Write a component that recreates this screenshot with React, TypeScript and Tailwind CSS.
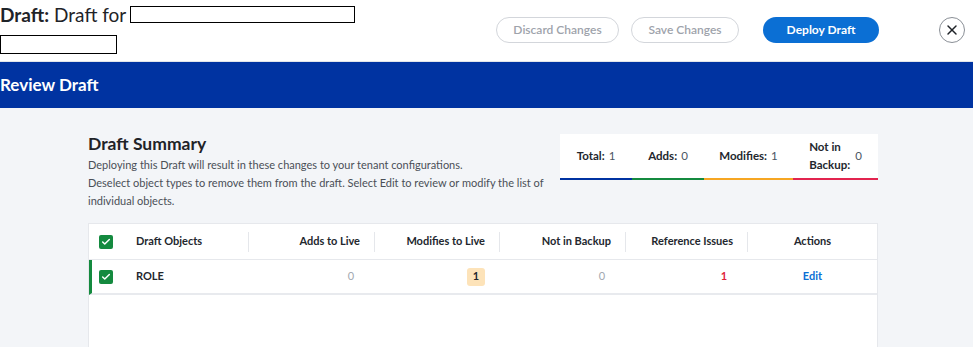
import { Check, X } from 'lucide-react';

const font = { fontFamily: 'Lato, "Noto Sans", sans-serif' };

const CheckBox = () => (
  <span className="flex h-[14px] w-[14px] items-center justify-center rounded-[2px] bg-[#148a3f]">
    <Check className="h-[10px] w-[10px] text-white" strokeWidth={3.5} />
  </span>
);

const Stat = ({ label, value, color, wide }: { label: string; value: string; color: string; wide?: boolean }) => (
  <div className={`flex items-center justify-center gap-1 border-b-2 ${color}`}>
    <span className={`font-bold text-[11.5px] leading-[18px] text-[#23272e] ${wide ? 'w-[42px]' : ''}`}>{label}</span>
    <span className="text-[11.5px] text-[#4b5563]">{value}</span>
  </div>
);

const HeadCell = ({ children, sep = true }: { children: React.ReactNode; sep?: boolean }) => (
  <div className="relative flex items-center justify-end pr-[14px] text-[11px] font-bold text-[#23272e]">
    {sep && <span className="absolute left-0 top-[8px] h-[20px] w-px bg-[#e5e7eb]" />}
    {children}
  </div>
);

const ValueCell = ({ children, className = '' }: { children: React.ReactNode; className?: string }) => (
  <div className="flex items-center justify-end pr-[14px]">
    <span className={`flex h-[18px] min-w-[18px] items-center justify-center rounded-[3px] text-[11px] ${className}`}>{children}</span>
  </div>
);

export default function App() {
  return (
    <div className="h-[347px] w-[973px] overflow-hidden bg-[#f3f5f8]" style={font}>
      <header className="flex h-[62px] items-start justify-between border-b border-[#e2e5ea] bg-white">
        <div className="flex flex-col">
          <div className="flex h-[28px] items-center text-[19px] leading-none text-[#1f2328]">
            <span className="font-bold">Draft:</span>
            <span className="ml-[5px]">Draft for</span>
            <span className="ml-[4px] h-[17px] w-[225px] border border-black bg-white" />
          </div>
          <span className="mt-[7px] h-[19px] w-[117px] border border-black bg-white" />
        </div>
        <div className="mt-[17px] mr-[8px] flex items-center">
          <button className="h-[26px] w-[123px] rounded-full border border-[#d3d6db] text-[12px] font-semibold text-[#9ea3ab]">
            Discard Changes
          </button>
          <button className="ml-[12px] h-[26px] w-[108px] rounded-full border border-[#d3d6db] text-[12px] font-semibold text-[#9ea3ab]">
            Save Changes
          </button>
          <button className="ml-[24px] h-[26px] w-[116px] rounded-full bg-[#0b6fd4] text-[12px] font-bold text-white">
            Deploy Draft
          </button>
          <button className="ml-[60px] flex h-[26px] w-[26px] items-center justify-center rounded-full border border-[#8a8f96] text-[#1f2328]">
            <X className="h-[16px] w-[16px]" strokeWidth={2.2} />
          </button>
        </div>
      </header>

      <div className="flex h-[46px] items-center bg-[#0033a1]">
        <h1 className="text-[17px] font-bold text-white">Review Draft</h1>
      </div>

      <main className="px-[88px] pr-[95px] pt-[24px]">
        <div className="flex items-start justify-between">
          <div>
            <h2 className="text-[17.5px] font-bold leading-[24px] text-[#1f2328]">Draft Summary</h2>
            <p className="w-[460px] text-[11px] leading-[18px] text-[#4a4f57]">
              Deploying this Draft will result in these changes to your tenant configurations.
              <br />
              Deselect object types to remove them from the draft. Select Edit to review or modify the list of individual objects.
            </p>
          </div>
          <div className="mt-[2px] grid h-[46px] w-[318px] grid-cols-[72px_72px_89px_85px] bg-white">
            <Stat label="Total:" value="1" color="border-[#0033a1]" />
            <Stat label="Adds:" value="0" color="border-[#148a3f]" />
            <Stat label="Modifies:" value="1" color="border-[#f6a623]" />
            <Stat label="Not in Backup:" value="0" color="border-[#e2244f]" wide />
          </div>
        </div>

        <div className="mt-[13px] h-[140px] border border-[#e6e8ec] bg-white">
          <div className="grid h-[36px] grid-cols-[47px_112px_126px_125px_126px_122px_131px] border-b border-[#e6e8ec]">
            <div className="flex items-center pl-[10px]">
              <CheckBox />
            </div>
            <div className="flex items-center text-[11px] font-bold text-[#23272e]">Draft Objects</div>
            <HeadCell>Adds to Live</HeadCell>
            <HeadCell>Modifies to Live</HeadCell>
            <HeadCell>Not in Backup</HeadCell>
            <HeadCell>Reference Issues</HeadCell>
            <div className="relative flex items-center justify-center text-[11px] font-bold text-[#23272e]">
              <span className="absolute left-0 top-[8px] h-[20px] w-px bg-[#e5e7eb]" />
              Actions
            </div>
          </div>
          <div className="grid h-[35px] grid-cols-[44px_112px_126px_125px_126px_122px_131px] border-b-2 border-l-[3px] border-b-[#e8eaee] border-l-[#148a3f]">
            <div className="flex items-center pl-[7px]">
              <CheckBox />
            </div>
            <div className="flex items-center text-[11px] font-bold text-[#23272e]">ROLE</div>
            <ValueCell className="text-[#a3a8b0]">0</ValueCell>
            <ValueCell className="bg-[#fde3b9] font-bold text-[#23272e]">1</ValueCell>
            <ValueCell className="text-[#a3a8b0]">0</ValueCell>
            <ValueCell className="font-bold text-[#e0243c]">1</ValueCell>
            <div className="flex items-center justify-center text-[11px] font-bold text-[#0b6fd4]">Edit</div>
          </div>
        </div>
      </main>
    </div>
  );
}
